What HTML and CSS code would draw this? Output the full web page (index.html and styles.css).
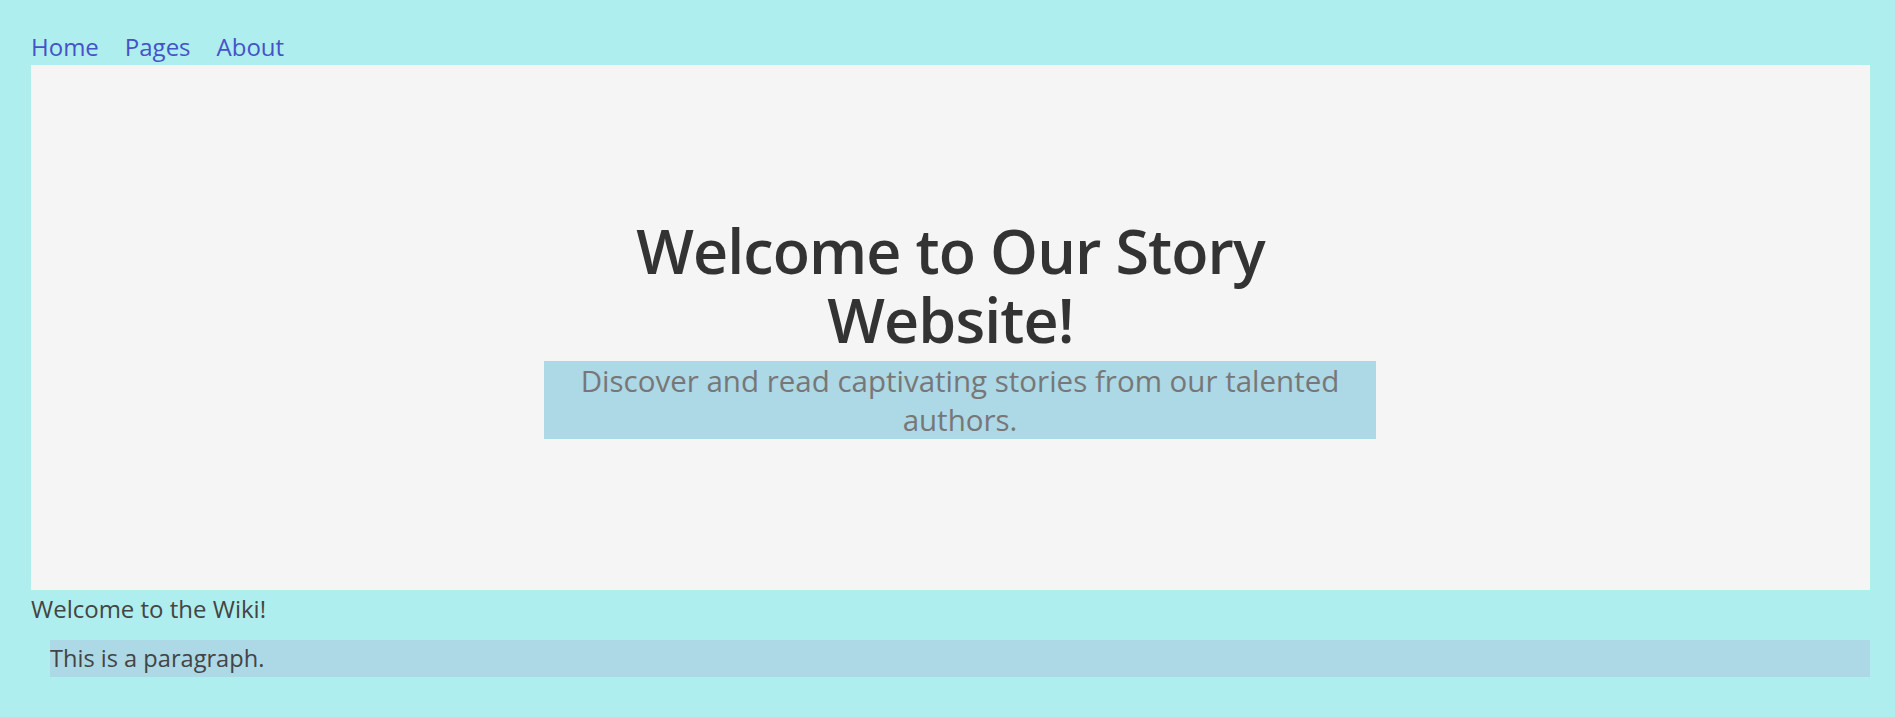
FILE: index.html
```html
<!DOCTYPE html>
<html lang="en">
<head>
<meta charset="utf-8">
<title>Story Website</title>
<link rel="stylesheet" href="styles.css">
</head>
<body>
<div class="page">
  <nav class="nav">
    <a class="nav-link" href="#">Home</a>
    <a class="nav-link" href="#">Pages</a>
    <a class="nav-link" href="#">About</a>
  </nav>
  <section class="hero">
    <h1 class="hero-title">Welcome to Our Story Website!</h1>
    <p class="hero-sub">Discover and read captivating stories from our talented authors.</p>
  </section>
  <div class="wiki">Welcome to the Wiki!</div>
  <p class="para">This is a paragraph.</p>
</div>
</body>
</html>
```
FILE: styles.css
```css
html, body {
  margin: 0;
  padding: 0;
  background: #afeeee;
}
body {
  font-family: "Open Sans", "Noto Sans", sans-serif;
  color: #444;
}
.page {
  padding: 28px 25px 0 31px;
}
.nav {
  display: flex;
  gap: 26px;
  height: 37px;
  line-height: 37px;
  font-size: 24px;
}
.nav-link {
  color: #4652c8;
  text-decoration: none;
}
.hero {
  background: #f5f5f5;
  height: 525px;
  display: flex;
  flex-direction: column;
  align-items: center;
  justify-content: center;
}
.hero-title {
  margin: 0;
  max-width: 832px;
  font-size: 61px;
  line-height: 69px;
  letter-spacing: -0.9px;
  font-weight: 600;
  color: #333;
  text-align: center;
}
.hero-sub {
  margin: 7px 0 0 19px;
  width: 832px;
  background: #add8e6;
  color: #777;
  font-size: 29.5px;
  line-height: 39px;
  text-align: center;
}
.wiki {
  font-size: 24px;
  line-height: 37px;
  color: #444;
}
.para {
  margin: 13px 0 0 19px;
  background: #add8e6;
  font-size: 23.6px;
  line-height: 37px;
  color: #444;
}
```
